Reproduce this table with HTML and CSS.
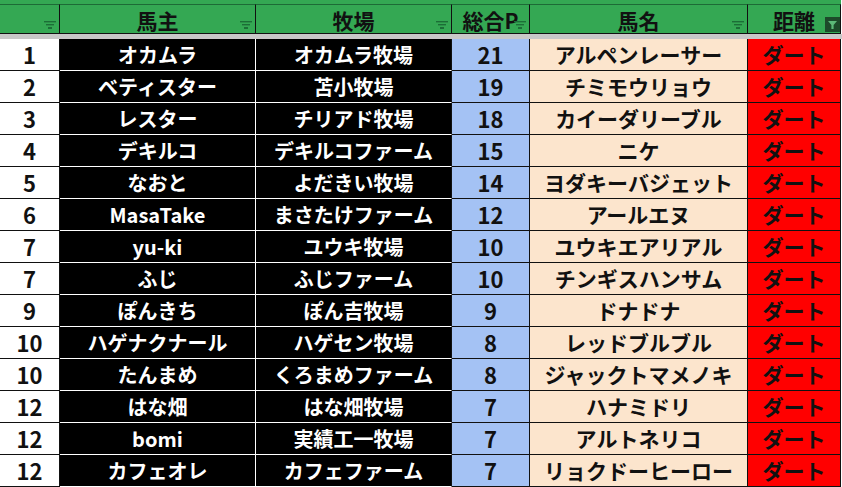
FILE: index.html
```html
<!DOCTYPE html>
<html lang="ja">
<head>
<meta charset="utf-8">
<title>ランキング</title>
<link rel="stylesheet" href="styles.css">
</head>
<body>
<div class="sheet">
  <div class="head">
    <div class="hc"><span class="hl"></span><svg class="flt" viewBox="0 0 12 8"><rect x="0" y="0" width="12" height="1.4"/><rect x="2" y="3" width="8" height="1.4"/><rect x="4" y="6" width="4" height="2"/></svg></div>
    <div class="hc"><span class="hl">馬主</span><svg class="flt" viewBox="0 0 12 8"><rect x="0" y="0" width="12" height="1.4"/><rect x="2" y="3" width="8" height="1.4"/><rect x="4" y="6" width="4" height="2"/></svg></div>
    <div class="hc"><span class="hl">牧場</span><svg class="flt" viewBox="0 0 12 8"><rect x="0" y="0" width="12" height="1.4"/><rect x="2" y="3" width="8" height="1.4"/><rect x="4" y="6" width="4" height="2"/></svg></div>
    <div class="hc hc-p"><span class="hl">総合P</span><svg class="flt" viewBox="0 0 12 8"><rect x="0" y="0" width="12" height="1.4"/><rect x="2" y="3" width="8" height="1.4"/><rect x="4" y="6" width="4" height="2"/></svg></div>
    <div class="hc"><span class="hl">馬名</span><svg class="flt" viewBox="0 0 12 8"><rect x="0" y="0" width="12" height="1.4"/><rect x="2" y="3" width="8" height="1.4"/><rect x="4" y="6" width="4" height="2"/></svg></div>
    <div class="hc hc-f"><span class="hl">距離</span><svg class="flt-on" viewBox="0 0 15 15"><rect width="15" height="15" fill="#1d4a2a"/><path d="M3 4h9l-3.4 4v4h-2.2v-4z" fill="#5cb878"/></svg></div>
  </div>
  <div class="band"></div>
  <div class="body" id="body"></div>
</div>
<script src="app.js"></script>
</body>
</html>
```

FILE: app.js
```js
const rows = [
  ["1","オカムラ","オカムラ牧場","21","アルペンレーサー"],
  ["2","ベティスター","苫小牧場","19","チミモウリョウ"],
  ["3","レスター","チリアド牧場","18","カイーダリーブル"],
  ["4","デキルコ","デキルコファーム","15","ニケ"],
  ["5","なおと","よだきい牧場","14","ヨダキーバジェット"],
  ["6","MasaTake","まさたけファーム","12","アールエヌ"],
  ["7","yu-ki","ユウキ牧場","10","ユウキエアリアル"],
  ["7","ふじ","ふじファーム","10","チンギスハンサム"],
  ["9","ぽんきち","ぽん吉牧場","9","ドナドナ"],
  ["10","ハゲナクナール","ハゲセン牧場","8","レッドブルブル"],
  ["10","たんまめ","くろまめファーム","8","ジャックトマメノキ"],
  ["12","はな畑","はな畑牧場","7","ハナミドリ"],
  ["12","bomi","実績工一牧場","7","アルトネリコ"],
  ["12","カフェオレ","カフェファーム","7","リョクドーヒーロー"]
];
const body = document.getElementById("body");
for (const r of rows) {
  const row = document.createElement("div");
  row.className = "row";
  const cls = ["c-rank", "c-owner", "c-farm", "c-pt", "c-horse", "c-dist"];
  const vals = [...r, "ダート"];
  vals.forEach((v, i) => {
    const c = document.createElement("div");
    c.className = "cell " + cls[i];
    c.textContent = v;
    row.appendChild(c);
  });
  body.appendChild(row);
}
```

FILE: styles.css
```css
html, body {
  margin: 0;
  padding: 0;
  background: #ffffff;
}
.sheet {
  width: 842px;
  font-family: "Noto Sans CJK JP", "Noto Sans", sans-serif;
  font-weight: 700;
}
.head, .row {
  display: grid;
  grid-template-columns: 60px 196px 196px 78px 218px 93px;
}
.head {
  background: #34a853;
  border-top: 4px solid #34a853;
  width: 841px;
}
.hc {
  position: relative;
  height: 28px;
  border-top: 1px solid #1d6b36;
  border-right: 1px solid #111;
  border-bottom: 1px solid #111;
  display: flex;
  align-items: center;
  justify-content: center;
  font-size: 21px;
  line-height: 28px;
  color: #111;
}
.hc .hl {
  margin-top: 1px;
}
.flt {
  position: absolute;
  right: 3px;
  top: 16px;
  width: 12px;
  height: 8px;
  fill: #1c6e37;
}
.flt-on {
  position: absolute;
  right: 0;
  top: 12px;
  width: 15px;
  height: 15px;
}
.band {
  height: 5px;
  background: #c8c8c8;
  width: 842px;
}
.row {
  width: 841px;
}
.cell {
  height: 31px;
  display: flex;
  align-items: center;
  justify-content: center;
  border-right: 1px solid #111;
  border-bottom: 1px solid #111;
  font-size: 20px;
  line-height: 31px;
  color: #111;
  white-space: nowrap;
}
.c-rank {
  background: #ffffff;
  font-size: 22px;
}
.c-owner, .c-farm {
  background: #000000;
  color: #ffffff;
  border-bottom-color: #ffffff;
}
.c-owner {
  border-right-color: #ffffff;
}
.c-pt {
  background: #a4c2f4;
  font-size: 22px;
}
.c-horse {
  background: #fce5cd;
  font-size: 21px;
}
.c-dist {
  background: #ff0000;
  font-size: 21px;
}
```
